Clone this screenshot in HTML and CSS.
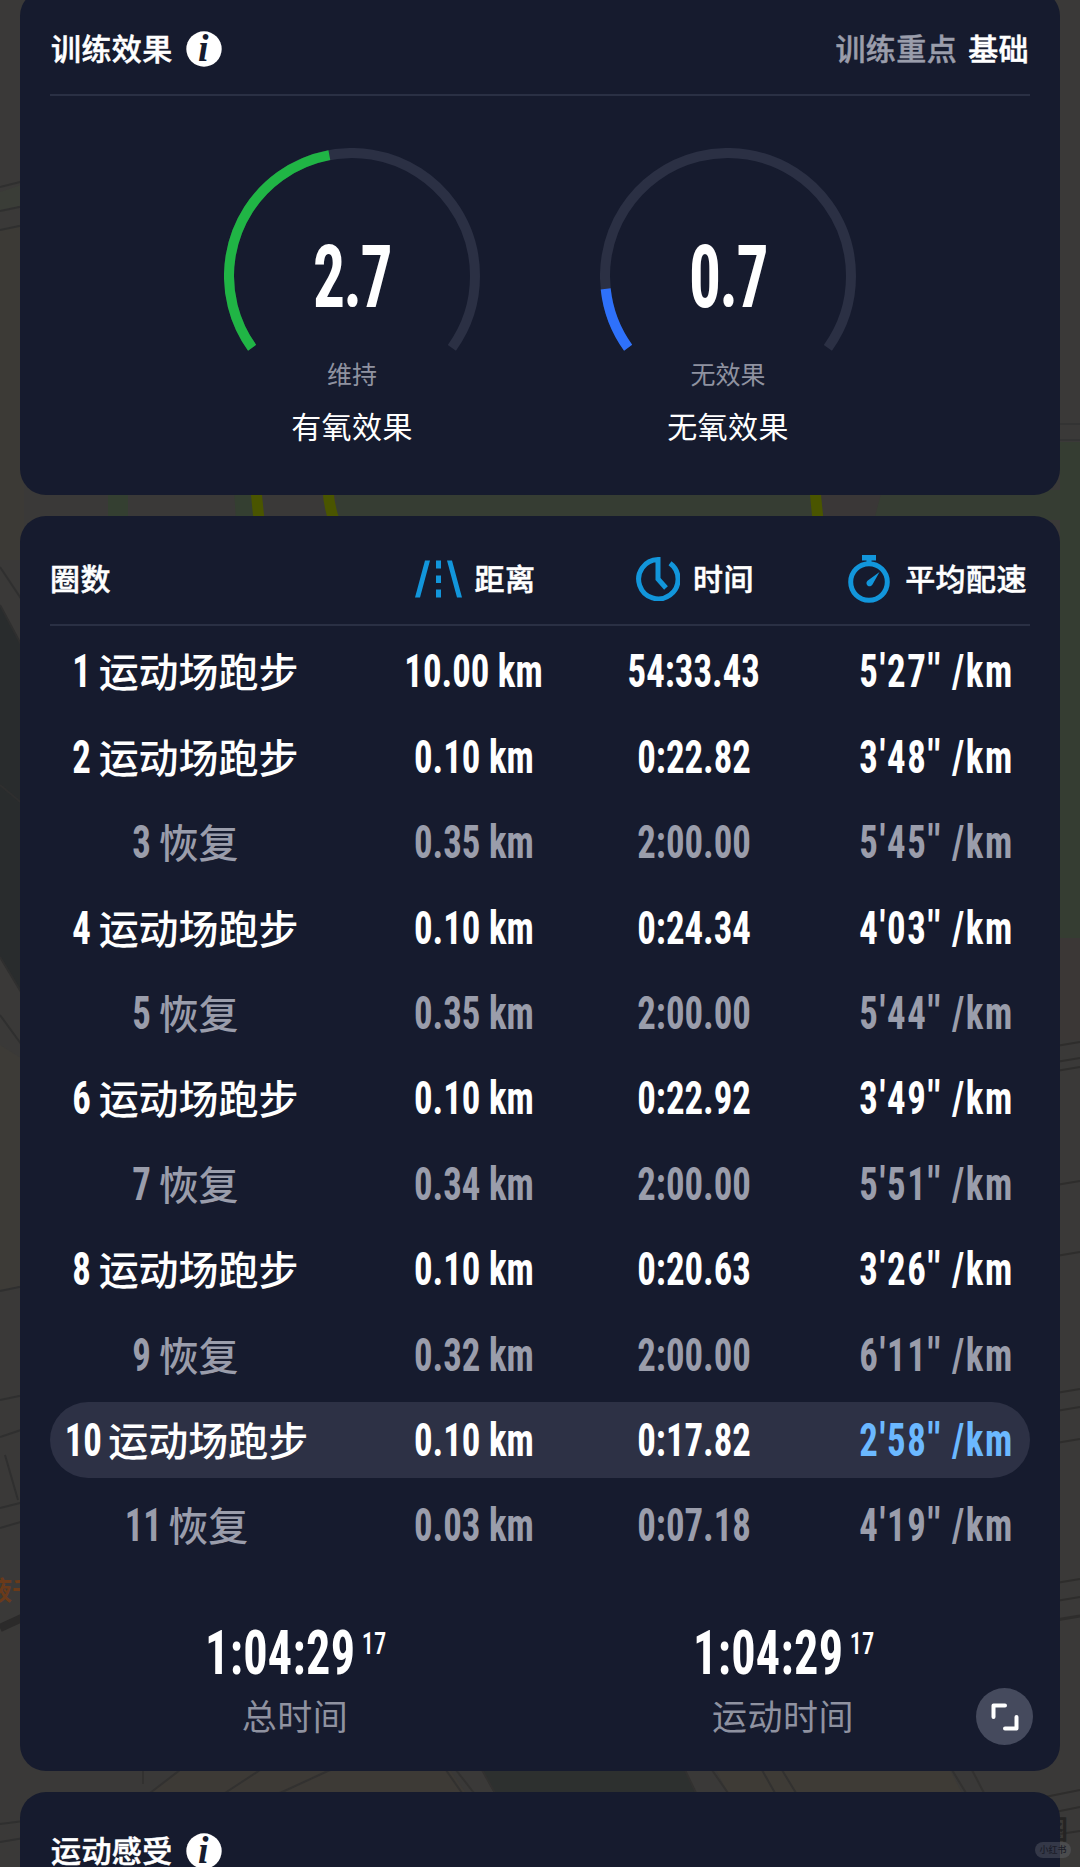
FILE: index.html
```
<!DOCTYPE html>
<html lang="zh-CN">
<head>
	<meta charset="UTF-8">
	<title>训练详情</title>
	<link rel="stylesheet" href="styles.css">
</head>
<body>
<!-- 地图背景 -->
<svg class="map" viewBox="0 0 1080 1867">
	<rect width="1080" height="1867" fill="#3a3938"/>
	<path d="M0 192L24 184V207L0 212z" fill="#3a3d37"/>
	<path d="M0 230L24 224V560H0z" fill="#3c3a36"/>
	<path d="M0 605L24 650V997L0 957z" fill="#292c2d"/>
	<path d="M0 1045L24 1060V1286L0 1290z" fill="#3d3b37"/>
	<g fill="none" stroke="#2f2f2f" stroke-width="2">
		<path d="M0 187L24 181M0 211L24 206M0 230L24 225"/>
		<path d="M0 567L24 603M0 605L24 650M0 957L24 997M0 1015L24 1048M0 785L24 805"/>
		<path d="M0 1291L24 1286M0 1400L24 1395M0 1437L24 1429M5 1455L18 1500M0 1508L24 1502M0 1528L24 1521"/>
		<path d="M0 1824L24 1821M0 1842L24 1838"/>
	</g>
	<path d="M0 1628L24 1617" stroke="#2b2a2a" stroke-width="8"/>
	<text class="poi orange" x="-14" y="1600">液千</text>

	<path d="M108 490h20v30h-20zM234 490h22v30h-20z" fill="#343f31"/>
	<path d="M336 490H1080V520H336z" fill="#363d33"/>
	<path d="M820 490h62l-8 30h-50z" fill="#3a3737"/>
	<path d="M256 490L259 520M328 490Q329 506 334 520M815 490L818 520" fill="none" stroke="#4a5500" stroke-width="11"/>

	<path d="M1060 442H1080V938H1060z" fill="#353d32"/>
	<path d="M1060 938H1080V1040H1060z" fill="#3b3736"/>
	<g fill="none" stroke="#2e2d2c" stroke-width="2">
		<path d="M1060 424H1080M1060 440H1080" stroke="#333"/>
		<path d="M1056 1046L1080 1042M1056 1062L1080 1058M1056 1071L1080 1067M1056 1185L1080 1181M1056 1256L1080 1252"/>
		<path d="M1056 1393L1080 1389M1056 1411L1080 1407M1056 1443L1080 1439M1056 1583L1080 1579M1056 1601L1080 1597"/>
		<path d="M1056 1620L1080 1616" stroke-width="3"/>
		<path d="M1040 1798L1080 1790M1040 1815L1080 1807M1060 1834L1080 1831"/>
	</g>

	<path d="M180 1770H450L466 1793H150z" fill="#3d3a36"/>
	<path d="M482 1770H685L696 1793H494z" fill="#2d302f"/>
	<path d="M716 1770H950L962 1793H728z" fill="#3e3b36"/>
	<g fill="none" stroke="#323130" stroke-width="2">
		<path d="M143 1770V1784M180 1770L150 1793M260 1770L225 1793M330 1770L280 1793M446 1770L462 1793M456 1770L474 1793"/>
		<path d="M482 1770L495 1793M685 1770L696 1793M712 1770L728 1793M762 1770L775 1793M782 1770L796 1793M952 1770L966 1793M972 1770L984 1793"/>
	</g>
	<text class="poi" x="1042" y="1839">图</text>
</svg>

<div class="page">
	<!-- 训练效果 -->
	<div class="card effect">
		<div class="card-head">
			<h2>训练效果</h2>
			<svg class="info" viewBox="0 0 36 36"><circle cx="18" cy="18" r="17.7"/><text x="17.5" y="29.500">i</text></svg>
			<p class="focus">训练重点 <b>基础</b></p>
		</div>
		<div class="gauges">
			<div class="gauge">
				<div class="dial">
					<svg viewBox="0 0 256 204">
						<g transform="rotate(144.3 128 128)">
							<circle class="track" cx="128" cy="128" r="123" pathLength="360" stroke-dasharray="251.4 360"/>
							<circle class="green" cx="128" cy="128" r="123" pathLength="360" stroke-dasharray="115.1 360"/>
						</g>
					</svg>
					<span class="value">2.7</span>
				</div>
				<p class="level">维持</p>
				<p class="name">有氧效果</p>
			</div>
			<div class="gauge">
				<div class="dial">
					<svg viewBox="0 0 256 204">
						<g transform="rotate(144.3 128 128)">
							<circle class="track" cx="128" cy="128" r="123" pathLength="360" stroke-dasharray="251.4 360"/>
							<circle class="blue" cx="128" cy="128" r="123" pathLength="360" stroke-dasharray="29.7 360"/>
						</g>
					</svg>
					<span class="value">0.7</span>
				</div>
				<p class="level">无效果</p>
				<p class="name">无氧效果</p>
			</div>
		</div>
	</div>

	<!-- 圈数 -->
	<div class="card laps">
		<div class="lap-head">
			<div class="first"><span>圈数</span></div>
			<div>
				<svg width="47" height="38" viewBox="0 0 47 38"><path d="M10 .5h5L5 37.500H0zM32 .5h5L47 37.500h-5zM21 .5h5v8h-5zM21 15.500h5v7.500h-5zM21 29.500h5v8h-5z"/></svg>
				<span>距离</span>
			</div>
			<div>
				<svg width="44" height="44" viewBox="0 0 44 44"><path class="line" d="M34 6.300A19.700 19.700 0 1 1 22 2.500V22L30 31"/></svg>
				<span>时间</span>
			</div>
			<div class="pace">
				<svg width="42" height="48" viewBox="0 0 42 48"><path d="M14 0h14v5.500h-4.500v4h-5v-4H14z"/><circle class="line" cx="21" cy="27" r="18.300"/><path d="M31.500 17L24.500 29.500a3.200 3.200 0 1 1-5-3.800z"/></svg>
				<span>平均配速</span>
			</div>
		</div>
		<div class="rows">
			<div class="row"><div><i>1</i><span>运动场跑步</span></div><div><i>10.00 km</i></div><div><i>54:33.43</i></div><div class="pace"><i>5'27'' /km</i></div></div>
			<div class="row"><div><i>2</i><span>运动场跑步</span></div><div><i>0.10 km</i></div><div><i>0:22.82</i></div><div class="pace"><i>3'48'' /km</i></div></div>
			<div class="row rest"><div><i>3</i><span>恢复</span></div><div><i>0.35 km</i></div><div><i>2:00.00</i></div><div class="pace"><i>5'45'' /km</i></div></div>
			<div class="row"><div><i>4</i><span>运动场跑步</span></div><div><i>0.10 km</i></div><div><i>0:24.34</i></div><div class="pace"><i>4'03'' /km</i></div></div>
			<div class="row rest"><div><i>5</i><span>恢复</span></div><div><i>0.35 km</i></div><div><i>2:00.00</i></div><div class="pace"><i>5'44'' /km</i></div></div>
			<div class="row"><div><i>6</i><span>运动场跑步</span></div><div><i>0.10 km</i></div><div><i>0:22.92</i></div><div class="pace"><i>3'49'' /km</i></div></div>
			<div class="row rest"><div><i>7</i><span>恢复</span></div><div><i>0.34 km</i></div><div><i>2:00.00</i></div><div class="pace"><i>5'51'' /km</i></div></div>
			<div class="row"><div><i>8</i><span>运动场跑步</span></div><div><i>0.10 km</i></div><div><i>0:20.63</i></div><div class="pace"><i>3'26'' /km</i></div></div>
			<div class="row rest"><div><i>9</i><span>恢复</span></div><div><i>0.32 km</i></div><div><i>2:00.00</i></div><div class="pace"><i>6'11'' /km</i></div></div>
			<div class="row best"><div class="two"><i>10</i><span>运动场跑步</span></div><div><i>0.10 km</i></div><div><i>0:17.82</i></div><div class="pace"><i>2'58'' /km</i></div></div>
			<div class="row rest"><div class="two"><i>11</i><span>恢复</span></div><div><i>0.03 km</i></div><div><i>0:07.18</i></div><div class="pace"><i>4'19'' /km</i></div></div>
		</div>
		<div class="totals">
			<div class="total">
				<div class="clock">1:04:29<sup>17</sup></div>
				<p>总时间</p>
			</div>
			<div class="total">
				<div class="clock">1:04:29<sup>17</sup></div>
				<p>运动时间</p>
			</div>
		</div>
		<div class="expand">
			<svg width="28" height="28" viewBox="0 0 28 28"><path d="M2.500 14V2.500H14M25.500 14V25.500H14"/></svg>
		</div>
	</div>

	<!-- 运动感受 -->
	<div class="card feel">
		<div class="card-head">
			<h2>运动感受</h2>
			<svg class="info" viewBox="0 0 36 36"><circle cx="18" cy="18" r="17.7"/><text x="17.5" y="29.500">i</text></svg>
		</div>
	</div>
</div>
<div class="mark">小红书</div>
</body>
</html>
```
FILE: styles.css
```
html{
	overflow: hidden;
}
body,h2,p{
	margin: 0;
	padding: 0;
}
body{
	position: relative;
	width: 1080px;
	height: 1867px;
	overflow: hidden;
	background: #3a3938;
	color: #fff;
	font-family: "Noto Sans CJK SC", sans-serif;
}
.map{
	position: absolute;
	left: 0;
	top: 0;
	width: 1080px;
	height: 1867px;
}
.poi{
	font-size: 26px;
	font-weight: 700;
	fill: #252423;
}
.orange{
	fill: #6a3a1a;
}
.page{
	position: relative;
	display: flex;
	flex-direction: column;
	gap: 21px;
	margin-top: -10px;
	padding: 0 20px;
}
.card{
	position: relative;
	box-sizing: border-box;
	flex: none;
	padding: 0 30px;
	border-radius: 26px;
	background: #161b2e;
}
.effect{
	height: 505px;
}
.laps{
	height: 1255px;
}
.feel{
	height: 76px;
	border-radius: 26px 26px 0 0;
}

/* 卡片标题 */
.card-head{
	display: flex;
	align-items: center;
	box-sizing: border-box;
	height: 106px;
	padding-top: 13px;
	border-bottom: 2px solid #2a3044;
	font-size: 30px;
	letter-spacing: .4px;
}
.feel .card-head{
	height: 104px;
	border: 0;
}
h2,.focus,.lap-head{
	-webkit-text-stroke: .5px;
}
h2{
	padding: 0 0 4px 1px;
	font-size: 30px;
	font-weight: 500;
}
.info{
	width: 36px;
	height: 36px;
	margin-left: 13px;
}
.info circle{
	fill: #fff;
}
.info text{
	fill: #161b2e;
	font-family: "Liberation Serif", serif;
	font-size: 38px;
	font-style: italic;
	font-weight: 700;
	text-anchor: middle;
}
.focus{
	margin-left: auto;
	padding: 0 1px 4px 0;
	color: #9a9dab;
	font-weight: 500;
	word-spacing: 4px;
}
.focus b{
	color: #fff;
	font-weight: 500;
}

/* 圆环 */
.gauges{
	display: flex;
	justify-content: center;
	gap: 120px;
	padding-top: 52px;
}
.gauge{
	width: 256px;
	text-align: center;
}
.dial{
	display: grid;
	height: 204px;
}
.dial svg,.value{
	grid-area: 1 / 1;
}
.dial circle{
	fill: none;
	stroke-width: 10;
}
.dial .track{
	stroke: #2b3044;
}
.dial .green{
	stroke: #20b545;
}
.dial .blue{
	stroke: #2e71fb;
}
.value{
	font-family: Roboto, sans-serif;
	font-size: 88px;
	font-stretch: 75%;
	font-weight: 700;
	line-height: 257px;
	letter-spacing: -2px;
	transform: scaleX(.72);
}
.level{
	margin-top: 3px;
	color: #8f92a0;
	font-size: 25px;
	line-height: 36px;
}
.name{
	margin-top: 16px;
	font-size: 30px;
	line-height: 36px;
	letter-spacing: .4px;
}

/* 表格 */
.lap-head,.row{
	display: grid;
	grid-template-columns: 270px 308px 132px 270px;
}
.lap-head{
	box-sizing: border-box;
	height: 110px;
	padding-top: 18px;
	border-bottom: 2px solid #2a3044;
	font-size: 30px;
	font-weight: 500;
	letter-spacing: .4px;
}
.lap-head div,.row div{
	display: flex;
	align-items: center;
	justify-content: center;
	white-space: nowrap;
}
.lap-head div{
	gap: 13px;
	padding-left: 2px;
}
.lap-head span{
	padding-bottom: 4px;
}
.lap-head .first{
	justify-content: flex-start;
	padding-left: 0;
}
.lap-head svg{
	flex: none;
	fill: #1296db;
}
.lap-head .line{
	fill: none;
	stroke: #1296db;
	stroke-width: 5;
}
.row .pace{
	padding-left: 82px;
}
.lap-head .pace{
	gap: 15px;
	padding-left: 85px;
}
.rows{
	padding-top: 7.4px;
}
.row{
	height: 76px;
	margin-bottom: 9.4px;
	border-radius: 38px;
	font-size: 40px;
	font-weight: 500;
}
.row span{
	padding-bottom: 2px;
}
.row i{
	font-family: Roboto, sans-serif;
	font-size: 46px;
	font-stretch: 75%;
	font-style: normal;
	font-weight: 700;
	transform: scaleX(.8);
}
.row div:first-child i{
	margin: 0 5px 0 -1px;
}
.row div.two:first-child i{
	margin: 0 2px 0 -2px;
}
.row .pace i{
	letter-spacing: 2px;
	margin-right: -2px;
}
.rest{
	color: #9a9dab;
}
.best{
	background: #2d3145;
}
.best .pace{
	color: #6bb8ff;
}

/* 合计 */
.totals{
	display: flex;
	padding-top: 44px;
}
.total{
	width: 488px;
	text-align: center;
}
.clock{
	padding-left: 4px;
	font-family: Roboto, sans-serif;
	font-size: 61px;
	font-stretch: 75%;
	font-weight: 700;
	line-height: 72px;
	letter-spacing: .4px;
	transform: scaleX(.79);
}
.clock sup{
	display: inline-block;
	margin-left: 8px;
	font-size: 31px;
	font-weight: 500;
	letter-spacing: 0;
	line-height: 30px;
	vertical-align: 20px;
}
.total p{
	margin-top: 1px;
	padding-left: 2px;
	color: #8f92a0;
	font-size: 35px;
	line-height: 50px;
	letter-spacing: .5px;
}
.expand{
	position: absolute;
	right: 27px;
	bottom: 26px;
	display: flex;
	align-items: center;
	justify-content: center;
	width: 57px;
	height: 57px;
	border-radius: 50%;
	background: #454a5d;
}
.expand path{
	fill: none;
	stroke: #fff;
	stroke-width: 4;
	stroke-linecap: round;
	stroke-linejoin: round;
}
.mark{
	position: absolute;
	left: 1035px;
	top: 1842px;
	width: 36px;
	height: 16px;
	border-radius: 8px;
	background: rgba(110,112,120,.35);
	color: #1b1d28;
	font-size: 9px;
	font-weight: 500;
	line-height: 16px;
	text-align: center;
}
```
